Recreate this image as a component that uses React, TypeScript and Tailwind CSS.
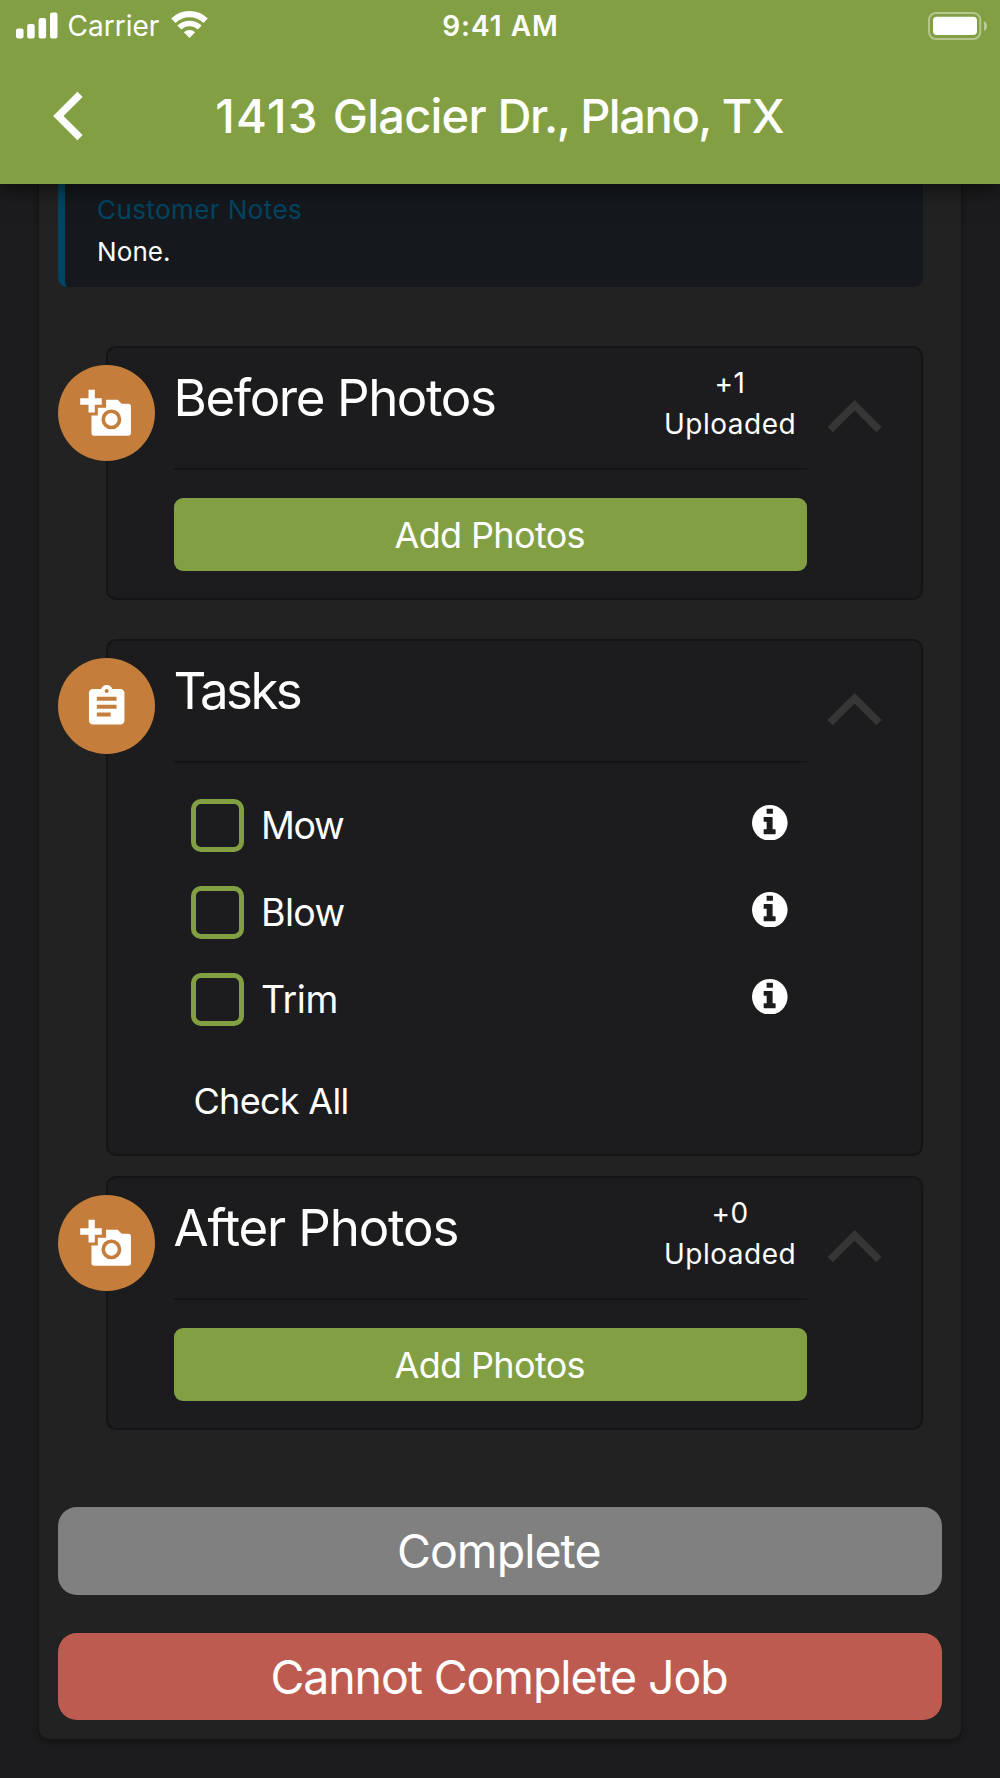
import React from 'react';
import { MdAssignment } from 'react-icons/md';

function SignalIcon() {
  return (
    <svg className="h-[27px] w-[42px]" viewBox="0 0 42 27" fill="white">
      <rect x="0" y="16.5" width="7.5" height="10" rx="2" />
      <rect x="11.2" y="12" width="7.5" height="14.5" rx="2" />
      <rect x="22.6" y="6" width="7.5" height="20.5" rx="2" />
      <rect x="34" y="0.5" width="7.5" height="26" rx="2" />
    </svg>
  );
}

function WifiIcon() {
  return (
    <svg className="h-[27px] w-[37px]" viewBox="0 0 37 27" fill="none">
      <path d="M2.4 10.3 A23 23 0 0 1 34.6 10.3" stroke="white" strokeWidth="6.2" transform="translate(0 -0.6)" />
      <path d="M8.3 17.2 A14.6 14.6 0 0 1 28.7 17.2" stroke="white" strokeWidth="5.6" transform="translate(0 -0.6)" />
      <path d="M18.5 27 L12.8 21.2 A8.3 8.3 0 0 1 24.2 21.2 Z" fill="white" />
    </svg>
  );
}

function BatteryIcon() {
  return (
    <svg className="h-[28px] w-[60px]" viewBox="0 0 60 28">
      <rect x="1" y="1" width="51.3" height="26" rx="7" fill="none" stroke="white" strokeOpacity="0.4" strokeWidth="2" />
      <rect x="5" y="4.8" width="44" height="18.2" rx="4" fill="white" />
      <path d="M56 9.2 C60 11 60 17.2 56 19 Z" fill="white" fillOpacity="0.45" />
    </svg>
  );
}

function AddPhotoIcon() {
  return (
    <svg className="size-[96.5px]" viewBox="84 584 291 291" fill="white">
      <path d="M176 659H195V684H216V704H195V727H176V704H151V684H176Z" />
      <path
        fillRule="evenodd"
        d="M229 689H264L276 701H296Q304 701 304 709V789Q304 797 296 797H193Q185 797 185 789V736H204V713H229Z M245 718A30 30 0 1 0 245 778A30 30 0 1 0 245 718Z"
      />
      <circle cx="245" cy="748" r="19" />
    </svg>
  );
}

function InfoIcon() {
  return (
    <svg className="mr-[19px] mb-[5px] size-[35.6px]" viewBox="0 0 107 107" fill="none">
      <circle cx="53.5" cy="53.5" r="53.5" fill="white" />
      <rect x="44" y="11.5" width="19" height="15" rx="1.5" fill="#1c1c1e" />
      <path d="M36.5 36H60Q62 36 62 38V73H69.5Q71 73 71 75V86Q71 88 69.5 88H36.5Q35 88 35 86V75Q35 73 36.5 73H44V50.5H36.5Q35 50.5 35 49V37.500Q35 36 36.5 36Z" fill="#1c1c1e" />
    </svg>
  );
}

function CollapseIcon() {
  return (
    <svg className="mt-[52px] h-[34px] w-[56px]" viewBox="0 0 56 34" fill="none">
      <path d="M3.2 29.7 L27.6 5.3 L52 29.7" stroke="#363636" strokeWidth="7.4" />
    </svg>
  );
}

type SectionProps = {
  title: React.ReactNode;
  icon: React.ReactNode;
  uploaded?: React.ReactNode;
  className: string;
  children: React.ReactNode;
};

function Section({ title, icon, uploaded, className, children }: SectionProps) {
  return (
    <section className={`relative ml-[48px] w-[817px] rounded-[10px] border-2 border-[#141416] bg-[#1c1c1e] pl-[66px] ${className}`}>
      <div className="absolute top-[16.5px] -left-[50px] flex size-[96.5px] items-center justify-center rounded-full bg-[#c47d3b]">
        {icon}
      </div>
      <div className="flex h-[121.5px] items-start">
        <div className="flex h-[121.5px] w-[632.5px] items-start border-b-[2.5px] border-[#141416]">
          <h2 className="mt-5 flex-1 text-[51px] leading-[60px] whitespace-nowrap -ml-[0.5px]">{title}</h2>
          {uploaded && (
            <div className="mt-[15px] mr-[10.5px] w-[132px] text-center text-[28px] leading-[41px] tracking-[0.5px]">
              {uploaded}
              <div>Uploaded</div>
            </div>
          )}
        </div>
        <div className="ml-[20.5px]">
          <CollapseIcon />
        </div>
      </div>
      {children}
    </section>
  );
}

function AddPhotosButton() {
  return (
    <button className="mt-[28.5px] flex h-[73px] w-[632.5px] items-center justify-center rounded-[9px] bg-[#82a043] pr-[1px] text-[36px] leading-none tracking-[-0.65px]">
      Add Photos
    </button>
  );
}

function TaskRow({ children }: { children: React.ReactNode }) {
  return (
    <div className="flex h-[53px] w-[633px] items-center pl-[17px]">
      <span className="size-[53px] rounded-[10px] border-[5px] border-[#82a043]" />
      <span className="ml-[17px] flex-1 text-[37.5px] leading-[53px]">{children}</span>
      <InfoIcon />
    </div>
  );
}

export default function App() {
  return (
    <div className="flex h-[1778px] w-[1000px] flex-col overflow-hidden bg-[#1c1c1e] font-['Inter',sans-serif] text-white">
      <header className="relative z-10 h-[183.5px] shrink-0 bg-[#82a043] shadow-[0_4px_22px_rgba(0,0,0,0.6)]">
        <div className="grid h-[50px] grid-cols-[1fr_auto_1fr] items-center px-4">
          <div className="flex items-center">
            <SignalIcon />
            <span className="ml-[9.5px] pt-px text-[28px] leading-[50px]">Carrier</span>
            <div className="ml-[11.5px] pb-[3px]">
              <WifiIcon />
            </div>
          </div>
          <span className="pt-px pl-px text-[28px] leading-[50px] font-semibold tracking-[1px]">9:41 AM</span>
          <div className="-mr-1 flex justify-end">
            <BatteryIcon />
          </div>
        </div>
        <div className="grid h-[132px] grid-cols-[100px_1fr_100px] items-center">
          <svg className="ml-[51.5px] h-[50px] w-[32px]" viewBox="0 0 32 50" fill="none">
            <path d="M28 3.4 L6.400 25 L28 46.6" stroke="white" strokeWidth="7.4" />
          </svg>
          <h1 className="pr-px text-center text-[47px] leading-[60px] font-medium tracking-[-1.43px] whitespace-nowrap">
            <span className="tracking-[1.4px]">1413 </span>
            <span className="tracking-[-0.77px]">Glacier </span>
            Dr., Plano, <span className="tracking-[-0.77px]">TX</span>
          </h1>
        </div>
      </header>

      <main className="mx-[39px] h-[1555.5px] shrink-0 rounded-b-[10px] bg-[#222222] px-[19px] shadow-[0_2px_6px_rgba(0,0,0,0.4)]">
        <div className="h-[103.5px] w-[865px] rounded-b-[9px] border-l-[7px] border-[#004563] bg-[#15191d] pt-[5px] pl-[32px] text-[26px] leading-[42px]">
          <div className="tracking-[0.42px] text-[#004563]">Customer Notes</div>
          <div className="tracking-[0.1px]">None.</div>
        </div>

        <Section
          className="mt-[59px] h-[253.5px]"
          title={<span className="tracking-[-1.43px]">Before Photos</span>}
          icon={<AddPhotoIcon />}
          uploaded={<div>+1</div>}
        >
          <AddPhotosButton />
        </Section>

        <Section
          className="mt-[39.5px] h-[517px]"
          title={<span className="tracking-[-2.6px]">Tasks</span>}
          icon={<MdAssignment className="mt-[2.5px] size-[47.4px]" />}
        >
          <div className="flex flex-col gap-[34px] pt-[36px]">
            <TaskRow><span className="tracking-[-1.3px]">Mow</span></TaskRow>
            <TaskRow><span className="tracking-[-0.64px]">Blow</span></TaskRow>
            <TaskRow><span className="tracking-[-0.46px]">Trim</span></TaskRow>
          </div>
          <button className="mt-[50px] ml-[19.5px] block text-[36px] leading-[50px] tracking-[-0.7px]">Check All</button>
        </Section>

        <Section
          className="mt-[20px] h-[253.5px]"
          title={<span className="tracking-[-1.17px]">After Photos</span>}
          icon={<AddPhotoIcon />}
          uploaded={<div>+0</div>}
        >
          <AddPhotosButton />
        </Section>

        <button className="mt-[77.5px] flex h-[87.5px] w-[884px] items-center justify-center rounded-[19px] bg-[#808080] pt-[1.5px] pr-[2.5px] text-[46.5px] leading-none tracking-[-0.96px]">
          Complete
        </button>
        <button className="mt-[38.5px] flex h-[87px] w-[884px] items-center justify-center rounded-[19px] bg-[#be5b50] pt-[1.5px] pr-[2px] text-[46.5px] leading-none tracking-[-1.12px]">
          Cannot Complete Job
        </button>
      </main>
    </div>
  );
}
